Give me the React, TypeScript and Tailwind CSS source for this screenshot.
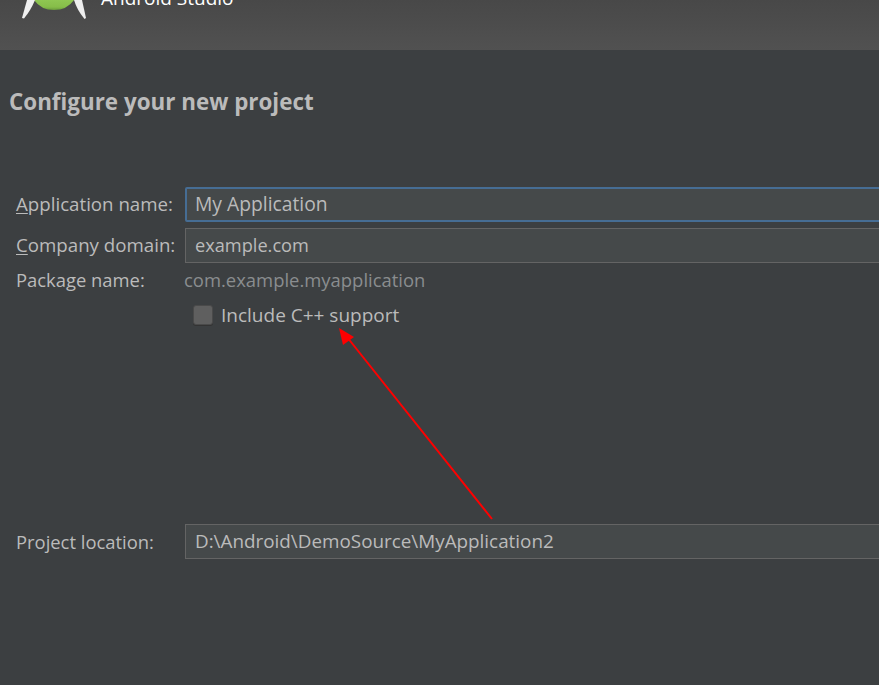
import React from "react";

const font = "font-['Open_Sans','Noto_Sans',sans-serif]";

function Field({
  label,
  mnemonic,
  value,
  focused,
  labelSize,
  valueSize,
}: {
  label: string;
  mnemonic?: string;
  value: string;
  focused?: boolean;
  labelSize: string;
  valueSize: string;
}) {
  return (
    <div className="flex items-center">
      <label className={`w-[185px] pl-4 text-[#bbbbbb] shrink-0 ${labelSize}`}>
        {mnemonic && <span className="underline underline-offset-2">{mnemonic}</span>}
        {label}
      </label>
      <div
        className={`flex-1 -mr-1 flex items-center h-[35px] text-[#bbbbbb] bg-[#45494a] ${valueSize} ${
          focused ? "pl-[8px] border-2 border-[#466d94] rounded-[2px]" : "pl-[9px] border border-[#646464]"
        }`}
      >
        {value}
      </div>
    </div>
  );
}

export default function App() {
  return (
    <div className={`relative w-[879px] h-[685px] overflow-hidden bg-[#3c3f41] ${font}`}>
      {/* header band, logo and title are cut by the top edge */}
      <div className="h-[50px] overflow-hidden bg-gradient-to-b from-[#484848] to-[#515151] flex items-start">
        <svg className="ml-[20px] shrink-0" width="70" height="22" viewBox="0 0 70 22">
          <defs>
            <linearGradient id="dome" x1="0" y1="0" x2="0" y2="1">
              <stop offset="0" stopColor="#8fc652" />
              <stop offset="0.7" stopColor="#86bd49" />
              <stop offset="1" stopColor="#6a9a3c" />
            </linearGradient>
          </defs>
          <path d="M14 0 H54 Q47 10 34 10 Q21 10 14 0 Z" fill="url(#dome)" />
          <path d="M7 0 H15 Q11 10 4 18.5 L2 18 Z" fill="#f0f0f0" />
          <path d="M54 0 H62 L66 18 L64.5 19 Q57 10 54 0 Z" fill="#eeeeee" />
        </svg>
        <div className="ml-[11px] -mt-[14px] text-[19px] leading-[24px] text-white">Android Studio</div>
      </div>

      <h1 className="mt-[37px] ml-[9px] text-[22.4px] leading-[30px] font-bold text-[#bbbbbb]">Configure your new project</h1>

      <div className="mt-[70px] flex flex-col">
        <Field mnemonic="A" label="pplication name:" value="My Application" focused labelSize="text-[18.7px]" valueSize="text-[19.3px]" />
        <div className="mt-[6px]">
          <Field mnemonic="C" label="ompany domain:" value="example.com" labelSize="text-[18.7px]" valueSize="text-[18.2px]" />
        </div>
        <div className="mt-[4px] flex items-center h-[26px]">
          <span className="w-[184px] pl-4 text-[18.4px] text-[#bbbbbb] shrink-0">Package name:</span>
          <span className="text-[18.45px] text-[#8a8d8f]">com.example.myapplication</span>
        </div>
        <div className="mt-[10px] flex items-center h-[24px] pl-[193px]">
          <span className="w-5 h-5 rounded-[3px] bg-[#5f5f5f] border border-[#4a4a4a] shadow-[0_1px_0_#333]" />
          <span className="ml-2 text-[19px] text-[#bbbbbb]">Include C++ support</span>
        </div>
        <div className="mt-[197px]">
          <Field label="Project location:" value="D:\Android\DemoSource\MyApplication2" labelSize="text-[18.4px]" valueSize="text-[18.85px]" />
        </div>
      </div>

      <svg className="absolute left-0 top-0 pointer-events-none" width="879" height="685">
        <line x1="492" y1="519" x2="347" y2="337" stroke="#ff0000" strokeWidth="2" />
        <path d="M339 328 L354 337 L343 345 Z" fill="#ff0000" />
      </svg>
    </div>
  );
}
